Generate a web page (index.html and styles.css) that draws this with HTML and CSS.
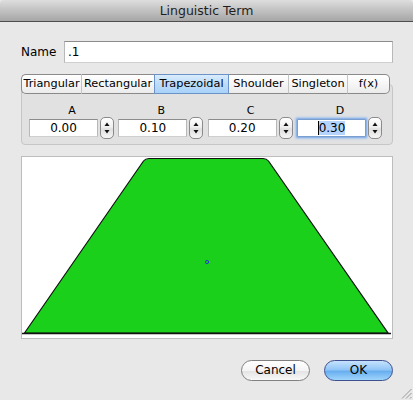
FILE: index.html
```html
<!DOCTYPE html>
<html>
<head>
<meta charset="utf-8">
<link rel="stylesheet" href="styles.css">
</head>
<body>
<div class="window">
  <div class="titlebar">Linguistic Term</div>
  <div class="content">
    <div class="name-row">
      <span class="name-label">Name</span>
      <div class="textfield name-field">.1</div>
    </div>
    <div class="tabview">
      <div class="tabs">
        <div class="tab w1 first">Triangular</div>
        <div class="tab w2">Rectangular</div>
        <div class="tab w3 selected">Trapezoidal</div>
        <div class="tab w4">Shoulder</div>
        <div class="tab w5">Singleton</div>
        <div class="tab w6 last">f(x)</div>
      </div>
      <div class="panel">
        <div class="params">
          <div class="param">
            <div class="plabel">A</div>
            <div class="pinputs">
              <div class="textfield numfield">0.00</div>
              <div class="stepper"><svg width="14" height="22" viewBox="0 0 14 22"><path d="M7 5.5 L9.5 9 L4.5 9 Z" fill="#111"/><path d="M7 16.5 L9.5 13 L4.5 13 Z" fill="#111"/></svg></div>
            </div>
          </div>
          <div class="param">
            <div class="plabel">B</div>
            <div class="pinputs">
              <div class="textfield numfield">0.10</div>
              <div class="stepper"><svg width="14" height="22" viewBox="0 0 14 22"><path d="M7 5.5 L9.5 9 L4.5 9 Z" fill="#111"/><path d="M7 16.5 L9.5 13 L4.5 13 Z" fill="#111"/></svg></div>
            </div>
          </div>
          <div class="param">
            <div class="plabel">C</div>
            <div class="pinputs">
              <div class="textfield numfield">0.20</div>
              <div class="stepper"><svg width="14" height="22" viewBox="0 0 14 22"><path d="M7 5.5 L9.5 9 L4.5 9 Z" fill="#111"/><path d="M7 16.5 L9.5 13 L4.5 13 Z" fill="#111"/></svg></div>
            </div>
          </div>
          <div class="param">
            <div class="plabel">D</div>
            <div class="pinputs">
              <div class="textfield numfield focused"><span class="caret"></span><span class="sel">0.30</span></div>
              <div class="stepper"><svg width="14" height="22" viewBox="0 0 14 22"><path d="M7 5.5 L9.5 9 L4.5 9 Z" fill="#111"/><path d="M7 16.5 L9.5 13 L4.5 13 Z" fill="#111"/></svg></div>
            </div>
          </div>
        </div>
      </div>
    </div>
    <div class="chart">
      <svg width="370" height="181" viewBox="0 0 370 181">
        <path d="M2.5 176 L121.5 4 Q123.5 1.5 127 1.5 L241 1.5 Q244.5 1.5 246.5 4 L366 176 Z" fill="#1ad01a" stroke="#111" stroke-width="1.2"/>
        <line x1="0" y1="176.5" x2="369" y2="176.5" stroke="#111" stroke-width="1.3"/>
        <circle cx="185" cy="105" r="1.6" fill="none" stroke="#2238d8" stroke-width="1"/>
      </svg>
    </div>
    <div class="buttons">
      <div class="button cancel">Cancel</div>
      <div class="button ok">OK</div>
    </div>
  </div>
  <svg class="grip" width="12" height="12" viewBox="0 0 12 12">
    <line x1="11.5" y1="2" x2="2" y2="11.5" stroke="#999" stroke-width="1"/>
    <line x1="11.5" y1="6" x2="6" y2="11.5" stroke="#999" stroke-width="1"/>
    <line x1="11.5" y1="10" x2="10" y2="11.5" stroke="#999" stroke-width="1"/>
  </svg>
</div>
</body>
</html>
```
FILE: styles.css
```css
* { box-sizing: border-box; }
html, body {
  margin: 0;
  padding: 0;
  background: #e8e8e8;
}
body {
  font-family: "DejaVu Sans", "Liberation Sans", sans-serif;
  font-size: 12px;
  color: #000;
}
.window {
  position: relative;
  width: 413px;
  height: 400px;
  background: #e8e8e8;
  overflow: hidden;
}
.titlebar {
  height: 22px;
  border-bottom: 1px solid #4e4e4e;
  background: linear-gradient(#dedede, #c4c4c4 45%, #a6a6a6);
  border-radius: 4px 4px 0 0;
  text-align: center;
  font-size: 12.5px;
  line-height: 21px;
  color: #1e1e1e;
}
.content {
  padding: 19px 20px 0 21px;
}
.name-row {
  display: flex;
  align-items: center;
  height: 22px;
}
.name-label {
  width: 43px;
  font-size: 12px;
}
.textfield {
  background: #fff;
  border: 1px solid #b8b8b8;
  border-top-color: #8c8c8c;
  border-bottom-color: #cfcfcf;
}
.name-field {
  flex: 1;
  height: 22px;
  padding-left: 3px;
  line-height: 20px;
  font-size: 12px;
}
.tabview {
  margin-top: 11px;
  width: 372px;
}
.tabs {
  position: relative;
  z-index: 1;
  display: flex;
  height: 20px;
}
.tab {
  height: 20px;
  line-height: 18px;
  text-align: center;
  font-size: 11.3px;
  white-space: nowrap;
  background: linear-gradient(#ffffff, #f6f6f6 50%, #ebebeb);
  border-top: 1px solid #8a8a8a;
  border-bottom: 1px solid #8a8a8a;
  border-right: 1px solid #c4c4c4;
}
.tab.first {
  border-left: 1px solid #8a8a8a;
  border-radius: 5px 0 0 5px;
}
.tab.last {
  border-right: 1px solid #8a8a8a;
  border-radius: 0 5px 5px 0;
}
.tab.selected {
  background: linear-gradient(#d9ecfd, #bcdcfa 50%, #a8d2f8);
  border-top-color: #6b93c7;
  border-bottom-color: #6b93c7;
  border-right-color: #6b93c7;
  box-shadow: -1px 0 0 #6b93c7;
}
.w1 { width: 61px; }
.w2 { width: 73px; }
.w3 { width: 74px; }
.w4 { width: 60px; }
.w5 { width: 59px; }
.w6 { width: 42px; }
.panel {
  margin-top: -10px;
  height: 61px;
  background: #e1e1e1;
  border: 1px solid #c6c6c6;
  border-radius: 4px;
  padding: 19px 0 0 7px;
}
.params {
  display: grid;
  grid-template-columns: repeat(4, 85px);
  column-gap: 4.34px;
}
.plabel {
  height: 13px;
  line-height: 13px;
  text-align: center;
  font-size: 11px;
  padding-left: 1px;
}
.pinputs {
  display: flex;
  align-items: center;
  height: 22px;
  gap: 2px;
}
.numfield {
  width: 69px;
  height: 18px;
  line-height: 16px;
  text-align: center;
  font-size: 12px;
}
.numfield.focused {
  border-color: #7c9fd0;
  box-shadow: 0 0 0 1px #8fb4e6, 0 0 2px 2px #a9c6ee;
  border-radius: 1px;
}
.caret {
  display: inline-block;
  width: 1px;
  height: 14px;
  background: #000;
  vertical-align: -3px;
}
.sel {
  background: #b4d4fe;
}
.stepper {
  width: 14px;
  height: 22px;
  border: 1px solid #8a8a8a;
  border-radius: 5px;
  background: linear-gradient(#ffffff, #f0f0f0 45%, #e0e0e0 55%, #f4f4f4);
  overflow: hidden;
}
.stepper svg {
  display: block;
  margin: -1px 0 0 -1px;
}
.chart {
  margin-top: 11px;
  width: 372px;
  height: 183px;
  background: #fff;
  border: 1px solid #bdbdbd;
}
.chart svg {
  display: block;
}
.buttons {
  margin-top: 21px;
  display: flex;
  justify-content: flex-end;
  gap: 14px;
}
.button {
  width: 69px;
  height: 21px;
  border-radius: 11px;
  text-align: center;
  line-height: 19px;
  font-size: 12px;
}
.cancel {
  border: 1px solid #808080;
  background: linear-gradient(#ffffff, #f4f4f4 50%, #e4e4e4 55%, #f8f8f8);
}
.ok {
  border: 1px solid #3d4f8f;
  background: linear-gradient(#c6e2fd, #91c6f7 45%, #69aff0 55%, #9fd4fb);
}
.grip {
  position: absolute;
  right: 1px;
  bottom: 1px;
}
```
